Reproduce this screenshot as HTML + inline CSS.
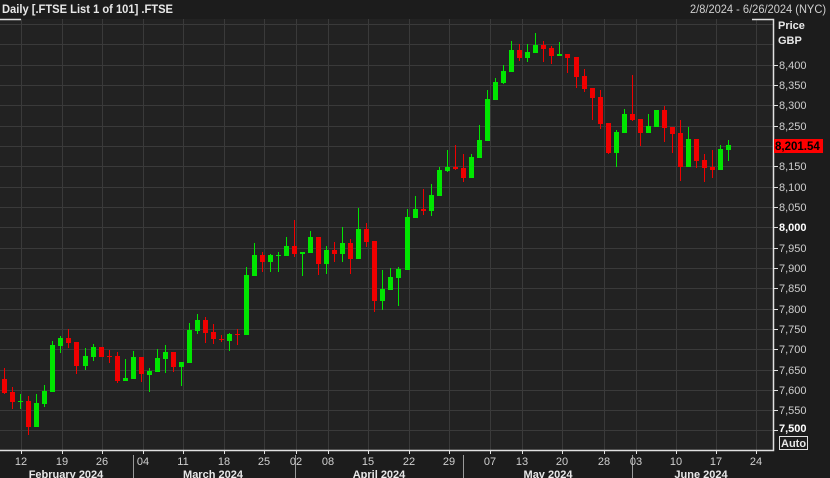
<!DOCTYPE html>
<html><head><meta charset="utf-8"><style>
html,body{margin:0;padding:0;background:#1c1c1c;width:830px;height:478px;overflow:hidden;font-family:"Liberation Sans",sans-serif}
</style></head><body>
<svg width="830" height="478" xmlns="http://www.w3.org/2000/svg" style="display:block;font-family:'Liberation Sans',sans-serif">
<rect x="0" y="0" width="830" height="478" fill="#1c1c1c"/>
<rect x="0" y="19" width="773" height="431" fill="#222222"/>
<!-- grid -->
<g stroke="#3a3a3a" stroke-width="1">
<path d="M0 24.5H773M0 44.5H773M0 65.5H773M0 85.5H773M0 105.5H773M0 126.5H773M0 146.5H773M0 166.5H773M0 187.5H773M0 207.5H773M0 227.5H773M0 248.5H773M0 268.5H773M0 288.5H773M0 309.5H773M0 329.5H773M0 349.5H773M0 370.5H773M0 390.5H773M0 410.5H773M0 430.5H773"/>
<path d="M21.5 19V450M62.5 19V450M102.5 19V450M143.5 19V450M183.5 19V450M224.5 19V450M264.5 19V450M296.5 19V450M328.5 19V450M368.5 19V450M409.5 19V450M449.5 19V450M490.5 19V450M522.5 19V450M562.5 19V450M604.5 19V450M636.5 19V450M676.5 19V450M716.5 19V450M756.5 19V450"/>
</g>
<!-- frame -->
<g stroke="#e0e0e0" stroke-width="1.5" fill="none">
<path d="M0 19.5H21M752 19.5H773.5V450.5H0"/>
</g>
<!-- candles -->
<g stroke="#00e600" stroke-width="1" fill="none">
<path d="M20.5 394V409M36.5 394V427M44.5 385V407M52.5 341V392M60.5 336V353M85.5 348V370M93.5 344V361M125.5 359V381M133.5 351V379M149.5 368V392M157.5 349V372M165.5 345V373M181.5 362V386M189.5 323V363M197.5 314V334M229.5 333V351M246.5 267V335M254.5 243V276M270.5 254V272M278.5 252V272M286.5 237V256M302.5 252V276M310.5 231V253M326.5 246V274M342.5 227V262M358.5 208V259M382.5 270V310M390.5 268V290M398.5 267V306M407.5 209V270M415.5 196V218M431.5 184V216M439.5 167V196M447.5 150V172M471.5 154V178M479.5 125V158M487.5 90V141M495.5 78V100M503.5 65V84M511.5 41V72M527.5 44V62M535.5 33V53M559.5 42V56M616.5 130V167M624.5 109V133M648.5 114V133M656.5 110V127M688.5 127V167M720.5 145V170M728.5 140V161"/>
</g>
<g fill="#00e600">
<path d="M18 401h5v1h-5zM34 403h5v24h-5zM42 391h5v13h-5zM50 345h5v47h-5zM58 338h5v8h-5zM83 356h5v10h-5zM91 347h5v10h-5zM123 378h5v3h-5zM131 357h5v22h-5zM147 371h5v4h-5zM155 358h5v14h-5zM163 352h5v7h-5zM179 362h5v5h-5zM187 330h5v33h-5zM195 320h5v11h-5zM227 334h5v7h-5zM244 275h5v60h-5zM252 255h5v21h-5zM268 255h5v7h-5zM276 255h5v1h-5zM284 246h5v10h-5zM300 252h5v2h-5zM308 237h5v16h-5zM324 250h5v14h-5zM340 243h5v11h-5zM356 229h5v30h-5zM380 289h5v12h-5zM388 277h5v13h-5zM396 269h5v9h-5zM405 217h5v53h-5zM413 209h5v9h-5zM429 195h5v16h-5zM437 170h5v26h-5zM445 167h5v4h-5zM469 157h5v21h-5zM477 140h5v18h-5zM485 99h5v42h-5zM493 82h5v18h-5zM501 71h5v12h-5zM509 50h5v22h-5zM525 52h5v6h-5zM533 45h5v8h-5zM557 54h5v2h-5zM614 132h5v21h-5zM622 114h5v19h-5zM646 126h5v7h-5zM654 110h5v17h-5zM686 139h5v28h-5zM718 149h5v21h-5zM726 145h5v5h-5z"/>
</g>
<g stroke="#f00000" stroke-width="1" fill="none">
<path d="M4.5 368V394M12.5 387V409M28.5 396V435M68.5 329V348M76.5 342V374M101.5 347V357M109.5 350V363M117.5 352V383M141.5 357V382M173.5 352V372M205.5 317V343M213.5 324V344M221.5 335V342M237.5 329V345M262.5 252V272M294.5 220V257M318.5 237V275M334.5 242V262M350.5 239V274M366.5 223V247M374.5 241V312M423.5 189V215M455.5 145V170M463.5 154V182M519.5 44V61M543.5 41V62M551.5 46V64M567.5 54V73M576.5 57V88M584.5 69V92M592.5 88V120M600.5 90V129M608.5 123V154M632.5 75V121M640.5 119V146M664.5 106V142M672.5 127V153M680.5 120V181M696.5 139V168M704.5 154V182M712.5 150V178"/>
</g>
<g fill="#f00000">
<path d="M2 379h5v14h-5zM10 392h5v10h-5zM26 401h5v26h-5zM66 338h5v5h-5zM74 342h5v24h-5zM99 347h5v10h-5zM107 356h5v1h-5zM115 356h5v25h-5zM139 357h5v17h-5zM171 352h5v15h-5zM203 320h5v13h-5zM211 332h5v7h-5zM219 339h5v1h-5zM235 334h5v1h-5zM260 255h5v7h-5zM292 246h5v8h-5zM316 237h5v27h-5zM332 250h5v4h-5zM348 243h5v16h-5zM364 229h5v13h-5zM372 241h5v60h-5zM421 209h5v2h-5zM453 167h5v2h-5zM461 168h5v10h-5zM517 50h5v8h-5zM541 45h5v4h-5zM549 48h5v8h-5zM565 54h5v4h-5zM574 57h5v20h-5zM582 76h5v13h-5zM590 88h5v10h-5zM598 97h5v27h-5zM606 123h5v30h-5zM630 114h5v6h-5zM638 119h5v14h-5zM662 110h5v18h-5zM670 127h5v7h-5zM678 133h5v34h-5zM694 139h5v22h-5zM702 160h5v8h-5zM710 167h5v3h-5z"/>
</g>
<!-- header -->
<text x="2" y="13" fill="#e8e8e8" font-size="12" font-weight="bold" textLength="171" lengthAdjust="spacingAndGlyphs">Daily [.FTSE List 1 of 101] .FTSE</text>
<text x="826" y="13" fill="#cfcfcf" font-size="12" text-anchor="end" textLength="136" lengthAdjust="spacingAndGlyphs">2/8/2024 - 6/26/2024 (NYC)</text>
<!-- right axis -->
<text x="778" y="29" fill="#e8e8e8" font-size="11" font-weight="bold">Price</text>
<text x="778" y="44" fill="#e8e8e8" font-size="11" font-weight="bold">GBP</text>
<g stroke="#e0e0e0" stroke-width="1">
<path d="M773 65.5h5M773 85.5h5M773 105.5h5M773 126.5h5M773 166.5h5M773 187.5h5M773 207.5h5M773 227.5h5M773 248.5h5M773 268.5h5M773 288.5h5M773 309.5h5M773 329.5h5M773 349.5h5M773 370.5h5M773 390.5h5M773 410.5h5M773 430.5h5"/>
</g>
<g fill="#cfcfcf" font-size="11">
<text x="779" y="69">8,400</text><text x="779" y="89">8,350</text><text x="779" y="109">8,300</text><text x="779" y="130">8,250</text>
<text x="779" y="170">8,150</text><text x="779" y="191">8,100</text><text x="779" y="211">8,050</text>
<text x="779" y="231" fill="#fff" font-weight="bold">8,000</text>
<text x="779" y="252">7,950</text><text x="779" y="272">7,900</text><text x="779" y="292">7,850</text><text x="779" y="313">7,800</text><text x="779" y="333">7,750</text><text x="779" y="353">7,700</text><text x="779" y="374">7,650</text><text x="779" y="394">7,600</text><text x="779" y="414">7,550</text>
<text x="779" y="432" fill="#fff" font-weight="bold">7,500</text>
</g>
<rect x="774" y="139" width="49" height="14" fill="#ff0000"/>
<text x="775" y="150" fill="#000" font-size="11.5" font-weight="bold">8,201.54</text>
<rect x="779.5" y="436.5" width="28" height="13" fill="none" stroke="#e0e0e0"/>
<text x="781" y="447" fill="#e8e8e8" font-size="11" font-weight="bold">Auto</text>
<!-- bottom axis -->
<g stroke="#e0e0e0" stroke-width="1">
<path d="M21.5 450v4M62.5 450v4M102.5 450v4M143.5 450v4M183.5 450v4M224.5 450v4M264.5 450v4M296.5 450v4M328.5 450v4M368.5 450v4M409.5 450v4M449.5 450v4M490.5 450v4M522.5 450v4M562.5 450v4M604.5 450v4M636.5 450v4M676.5 450v4M716.5 450v4M756.5 450v4"/>
<path d="M133.5 455v23M295.5 455v23M463.5 455v23M632.5 455v23" stroke="#9a9a9a"/>
</g>
<g fill="#cfcfcf" font-size="11" text-anchor="middle">
<text x="21" y="465">12</text><text x="62" y="465">19</text><text x="102" y="465">26</text><text x="143" y="465">04</text><text x="183" y="465">11</text><text x="224" y="465">18</text><text x="264" y="465">25</text><text x="296" y="465">02</text><text x="328" y="465">08</text><text x="368" y="465">15</text><text x="409" y="465">22</text><text x="449" y="465">29</text><text x="490" y="465">07</text><text x="522" y="465">13</text><text x="562" y="465">20</text><text x="604" y="465">28</text><text x="636" y="465">03</text><text x="676" y="465">10</text><text x="716" y="465">17</text><text x="756" y="465">24</text>
</g>
<g fill="#e8e8e8" font-size="11" font-weight="bold" text-anchor="middle">
<text x="66" y="478">February 2024</text><text x="213" y="478">March 2024</text><text x="379" y="478">April 2024</text><text x="548" y="478">May 2024</text><text x="701" y="478">June 2024</text>
</g>
</svg>
</body></html>
